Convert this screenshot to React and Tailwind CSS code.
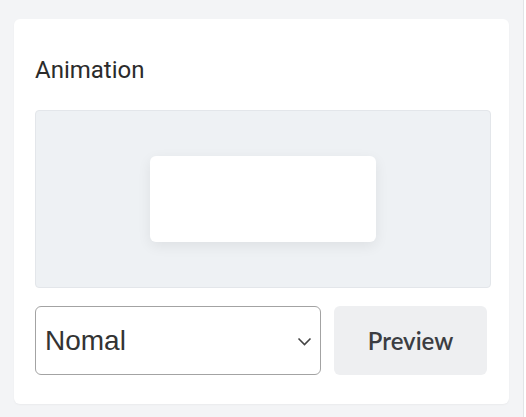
export default function App() {
  return (
    <div className="h-[417px] w-[524px] border-r border-[#e2e4e7] bg-[#f3f4f6] pl-[14px] pt-[19px]">
      {/* ── Card ── */}
      <div className="flex h-[385px] w-[495px] flex-col rounded-md bg-white pl-[21px] pr-[18px] pt-[37px] shadow-[0_1px_2px_rgba(0,0,0,0.04)]">
        <h2 className="m-0 font-[Roboto,sans-serif] text-[24px] font-normal leading-[29px] text-[#2b2b2b]">
          Animation
        </h2>

        {/* Preview stage */}
        <div className="mt-[25px] flex h-[178px] w-[456px] items-center justify-center rounded border border-[#e3e6ea] bg-[#eef1f4]">
          <div className="h-[86px] w-[226px] rounded-md bg-white shadow-[0_4px_14px_rgba(0,0,0,0.07)]" />
        </div>

        {/* Controls */}
        <div className="mt-[18px] flex gap-[13px]">
          <div className="relative h-[69px] w-[286px]">
            <select
              defaultValue="normal"
              className="h-full w-full appearance-none rounded-md border border-[#a3a3a3] bg-white pl-[9px] font-['Liberation_Sans',Arial,sans-serif] text-[28px] text-[#333] outline-none"
            >
              <option value="normal">Nomal</option>
              <option value="fade">Fade</option>
              <option value="slide">Slide</option>
            </select>
            <svg
              className="pointer-events-none absolute right-[9px] top-[31px]"
              width="15"
              height="9"
              viewBox="0 0 15 9"
              fill="none"
            >
              <path d="M1.5 1.5L7.5 7.5L13.5 1.5" stroke="#444" strokeWidth="1.6" />
            </svg>
          </div>

          <button className="h-[69px] w-[153px] rounded-md bg-[#eeeff1] font-[Lato,sans-serif] text-[24px] font-semibold text-[#3b3d42]">
            Preview
          </button>
        </div>
      </div>
    </div>
  );
}
